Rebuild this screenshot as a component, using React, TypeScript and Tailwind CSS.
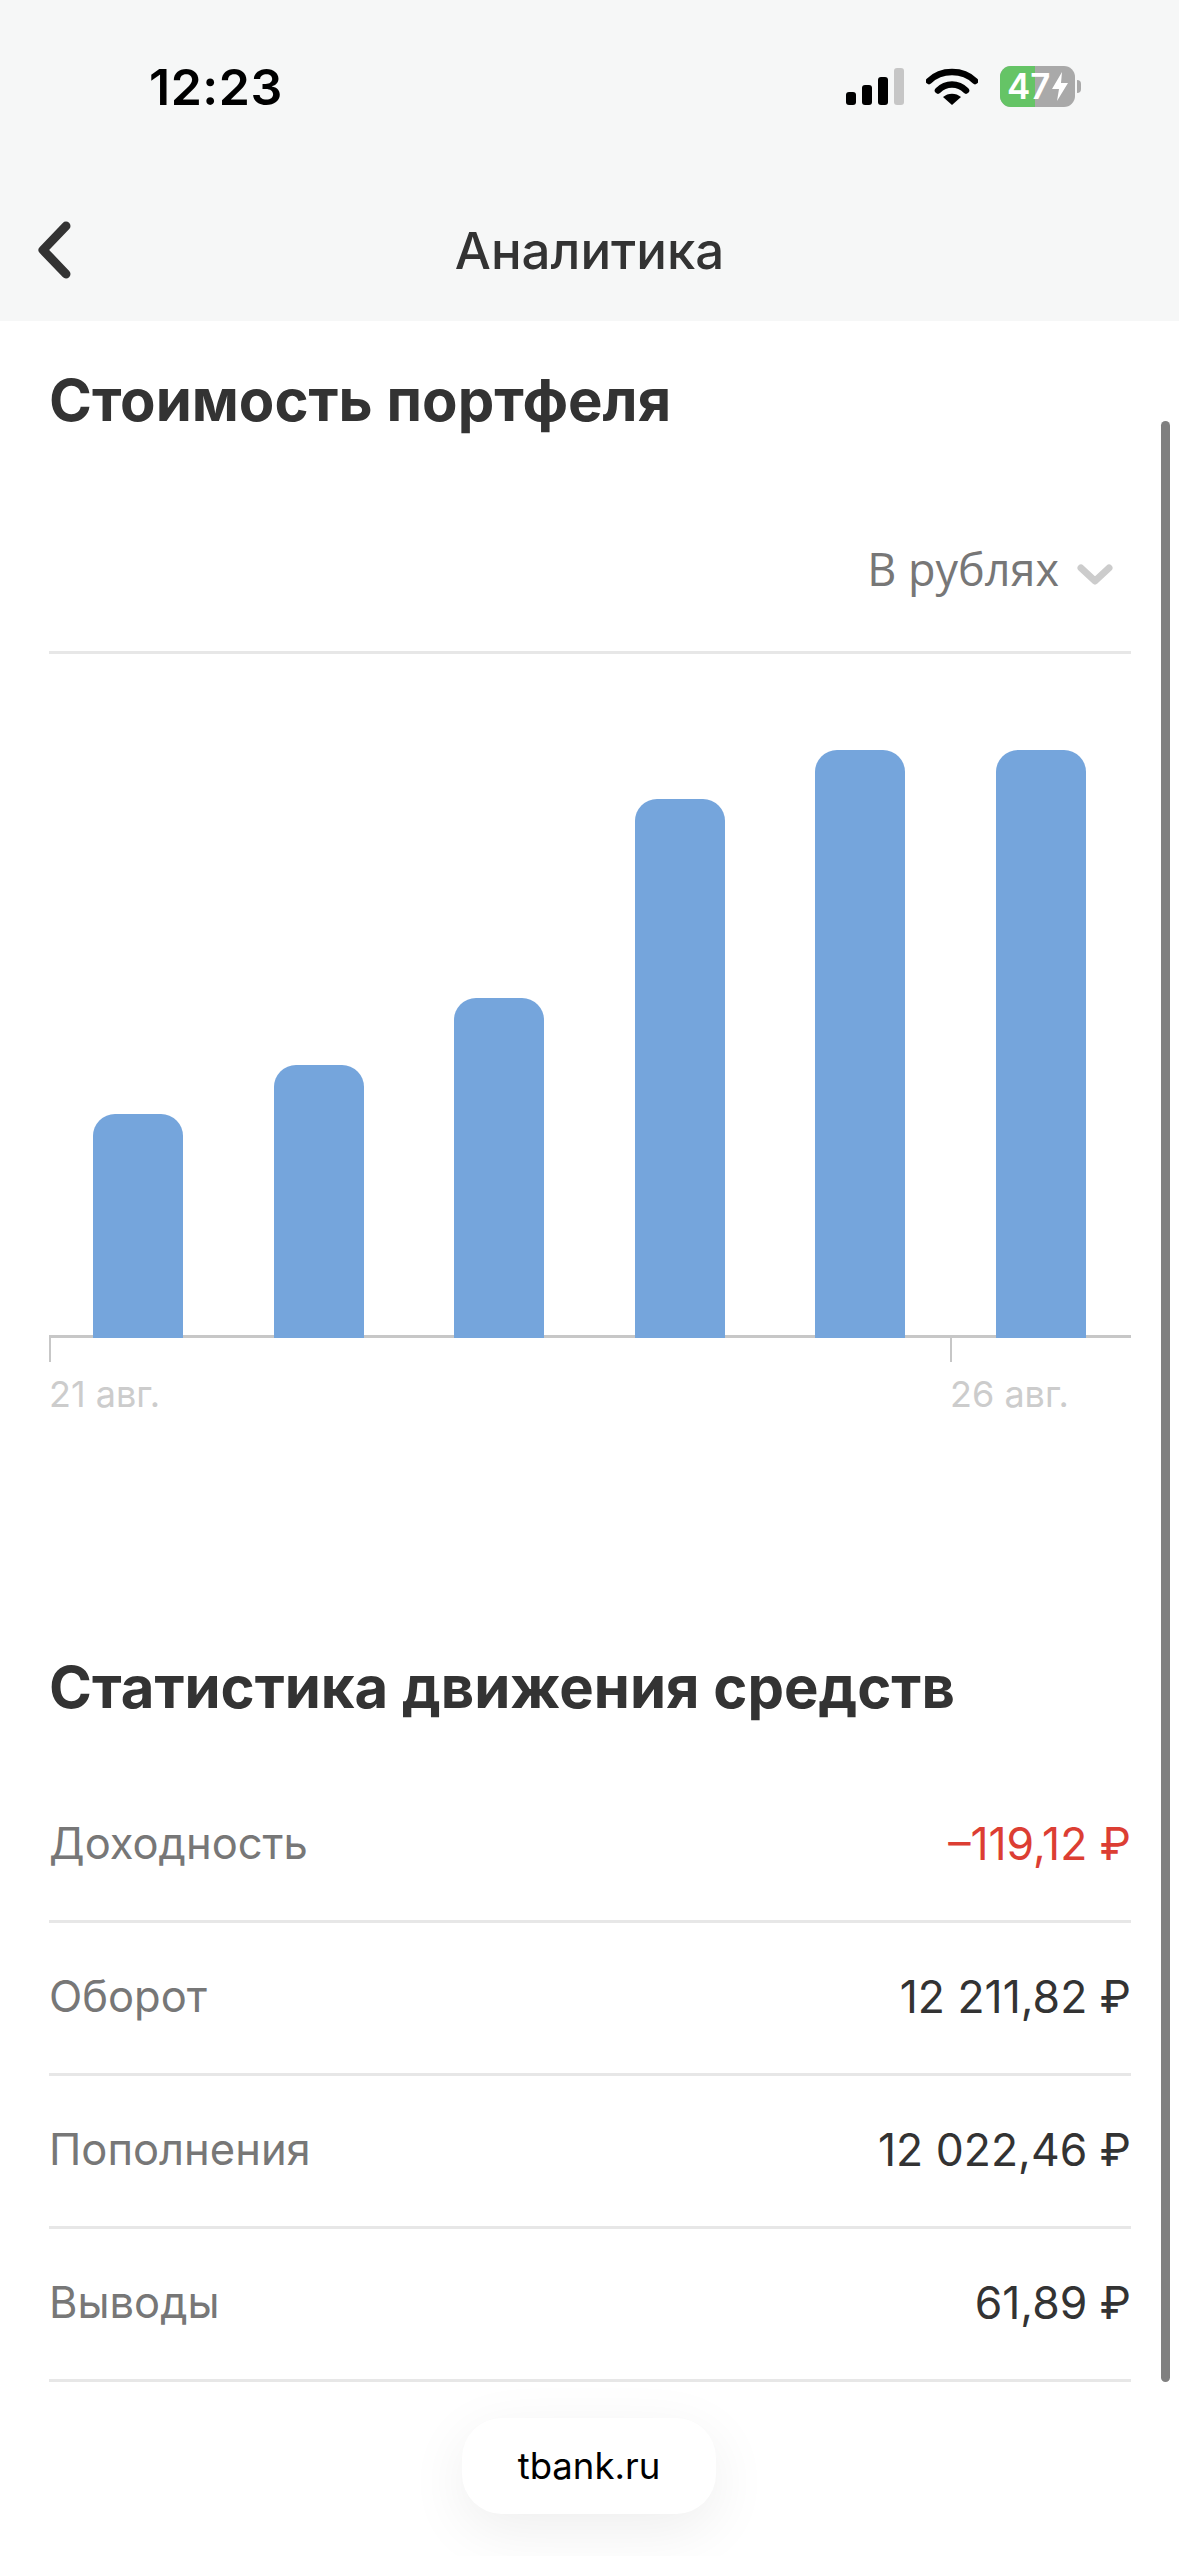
import React from 'react';

const bars = [224, 273, 340, 539, 588, 588];

const rows = [
  { label: 'Доходность', value: '–119,12 ₽', red: true },
  { label: 'Оборот', value: '12 211,82 ₽' },
  { label: 'Пополнения', value: '12 022,46 ₽' },
  { label: 'Выводы', value: '61,89 ₽' },
];

function StatusIcons() {
  return (
    <div className="flex items-center gap-[22px]">
      {/* Signal */}
      <div className="flex items-end gap-[6px] h-[37px]">
        <div className="w-[10px] h-[13px] rounded-[3px] bg-black" />
        <div className="w-[10px] h-[20px] rounded-[3px] bg-black" />
        <div className="w-[10px] h-[28px] rounded-[3px] bg-black" />
        <div className="w-[10px] h-[37px] rounded-[3px] bg-[#c6c6c6]" />
      </div>
      {/* Wifi */}
      <svg width="52" height="37" viewBox="0 0 52 37">
        <path d="M3 13 C15 1 37 1 49 13" fill="none" stroke="#000" strokeWidth="6.5" strokeLinecap="round" />
        <path d="M12 22.5 C20 14.5 32 14.5 40 22.5" fill="none" stroke="#000" strokeWidth="6.5" strokeLinecap="round" />
        <path d="M17 29 C22 24.5 30 24.5 35 29 L26 37 Z" fill="#000" />
      </svg>
      {/* Battery */}
      <div className="flex items-center gap-[2px]">
        <div className="relative w-[75px] h-[41px] rounded-[11px] overflow-hidden bg-[#a9a9a9] flex items-center pl-[7px]">
          <div className="absolute left-0 top-0 bottom-0 w-[35px] bg-[#65c466]" />
          <span className="relative text-white text-[35px] leading-none font-semibold">47</span>
          <svg className="relative ml-[1px]" width="18" height="29" viewBox="0 0 18 29">
            <path d="M11 0 L1 17 H8 L6 29 L17 11 H10 Z" fill="#fff" />
          </svg>
        </div>
        <div className="w-[4px] h-[13px] rounded-r-full bg-[#a9a9a9]" />
      </div>
    </div>
  );
}

export default function App() {
  return (
    <div className="relative w-[1179px] h-[2556px] overflow-hidden bg-white font-['Inter',sans-serif]">
      {/* Header */}
      <div className="h-[321px] bg-[#f6f7f7] flex flex-col">
        <div className="flex items-center justify-between pt-[61px] pl-[149px] pr-[98px] h-[112px]">
          <span className="text-[50px] leading-none font-semibold text-black tracking-[0.5px]">12:23</span>
          <StatusIcons />
        </div>
        <div className="relative flex items-center justify-center mt-[96px] h-[84px]">
          <svg className="absolute left-[36px] top-[11px]" width="38" height="62" viewBox="0 0 38 62">
            <path d="M30 7 L7 31 L30 55" fill="none" stroke="#333" strokeWidth="9" strokeLinecap="round" strokeLinejoin="round" />
          </svg>
          <span className="text-[51px] leading-none font-medium text-[#333]">Аналитика</span>
        </div>
      </div>

      {/* Content */}
      <div className="pl-[49px] pr-[48px]">
        <h1 className="mt-[45px] text-[58px] leading-[68px] font-bold text-[#333]">Стоимость портфеля</h1>

        <div className="mt-[108px] h-[112px] border-b-[3px] border-[#e7e7e7] flex items-start justify-end pr-[18px] gap-[18px]">
          <span className="text-[45px] leading-[54px] text-[#777] font-['Open_Sans',sans-serif]">В рублях</span>
          <svg className="mt-[22px]" width="36" height="22" viewBox="0 0 36 22">
            <path d="M4 4 L18 17 L32 4" fill="none" stroke="#ccc" strokeWidth="7" strokeLinecap="round" strokeLinejoin="round" />
          </svg>
        </div>

        {/* Chart */}
        <div className="mt-[93px] h-[591px] flex items-end gap-[90.6px] pl-[44px] border-b-[3px] border-[#c7c7c7]">
          {bars.map((h, i) => (
            <div key={i} className="w-[90px] rounded-t-[22px] bg-[#75a5dc] -mb-[3px]" style={{ height: h }} />
          ))}
        </div>
        <div className="relative h-[24px]">
          <div className="absolute left-0 top-0 w-[2px] h-[24px] bg-[#c7c7c7]" />
          <div className="absolute left-[901px] top-0 w-[2px] h-[24px] bg-[#c7c7c7]" />
        </div>
        <div className="flex text-[36px] leading-[44px] text-[#cccccc] mt-[10px]">
          <span className="w-[901px]">21 авг.</span>
          <span>26 авг.</span>
        </div>

        <h2 className="mt-[237px] text-[58px] leading-[68px] font-bold text-[#333]">Статистика движения средств</h2>

        <div className="mt-[49px]">
          {rows.map((r) => (
            <div key={r.label} className="h-[153px] flex items-center justify-between border-b-[3px] border-[#e7e7e7] pb-[2px]">
              <span className="text-[43.5px] text-[#777]">{r.label}</span>
              <span className={`text-[44.5px] ${r.red ? 'text-[#dc3e33]' : 'text-[#333]'}`}>{r.value}</span>
            </div>
          ))}
        </div>
      </div>

      {/* Scrollbar */}
      <div className="absolute left-[1161px] top-[421px] w-[9px] h-[1961px] rounded-full bg-[#808080]" />

      {/* Address pill */}
      <div className="absolute left-[462px] top-[2418px] w-[254px] h-[96px] rounded-[40px] bg-white shadow-[0_16px_60px_rgba(0,0,0,0.07)] flex items-center justify-center">
        <span className="text-[36.5px] leading-none text-black">tbank.ru</span>
      </div>
    </div>
  );
}
